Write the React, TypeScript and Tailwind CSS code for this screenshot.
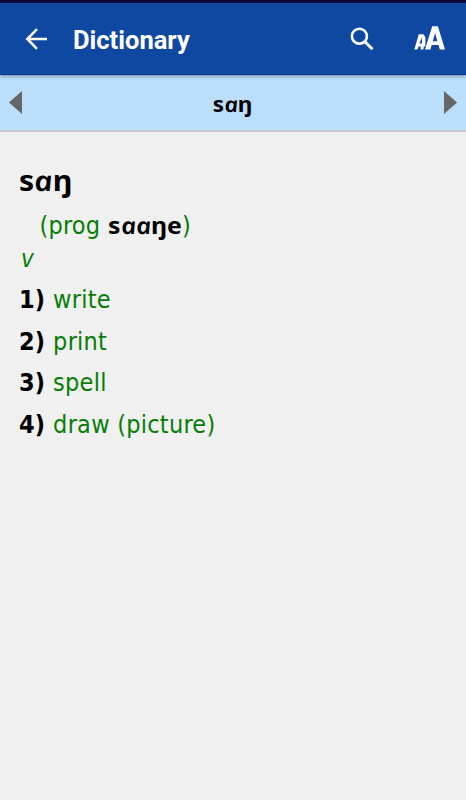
import { Fragment } from "react";

const senses = ["write", "print", "spell", "draw (picture)"];

/** Vernacular text, set with a single-storey "a". */
function Vernacular({ text, className = "" }: { text: string; className?: string }) {
  return (
    <span className={`inline-block font-['Noto_Sans',sans-serif] font-bold text-black ${className}`}>
      {text.split("").map((char, i) =>
        char === "a" ? (
          <span key={i} className="mr-[0.03em] inline-block skew-x-[7deg] scale-x-[1.04] font-semibold italic">
            {char}
          </span>
        ) : (
          <Fragment key={i}>{char}</Fragment>
        ),
      )}
    </span>
  );
}

function AppBar() {
  return (
    <header className="relative z-10 flex h-[75px] items-center border-t-[3px] border-b border-t-[#02063a] border-b-[#0433a0] bg-[#0f48a1] pl-[24px] pr-[20px] text-white shadow-[0_1px_4px_rgba(0,0,0,0.4)]">
      <button aria-label="Back" className="mt-px shrink-0">
        <svg className="size-[24px]" viewBox="0 0 24 24" fill="none" stroke="currentColor" strokeWidth="2.5">
          <path d="M23 12H3.5M13 2.2L3.3 12l9.7 9.8" />
        </svg>
      </button>
      <h1 className="ml-[25px] mt-[4px] font-['Roboto',sans-serif] text-[25.5px] font-bold leading-none">
        Dictionary
      </h1>
      <div className="ml-auto flex items-center">
        <button aria-label="Search">
          <svg className="size-[24px]" viewBox="0 0 24 24" fill="none" stroke="currentColor" strokeWidth="2.6">
            <circle cx="9.4" cy="9.2" r="7.5" />
            <path d="M14.9 14.7l7.6 7.6" strokeWidth="3" />
          </svg>
        </button>
        <button aria-label="Text size" className="mb-px ml-[40px]">
          <svg className="h-[24px] w-[32px]" viewBox="0 0 32 24" fill="currentColor" fillRule="evenodd">
            <path d="M0.3 23.5L4.8 8.3h4.7l1.9 3V20L9.6 21 9.4 23.5H6.6l.2-2.9H4.5L3.5 23.5zM5.4 17.5h2.6V11.5z" />
            <path d="M11 23.5L18.2 0.2h5.7L31 23.5h-5.2l-1.3-4.5h-6.8L16.4 23.5zM18.8 15.2h4.6L21.1 6.9z" />
          </svg>
        </button>
      </div>
    </header>
  );
}

function EntryNav() {
  return (
    <nav className="flex h-[57px] items-center justify-between border-b-2 border-[#cbcbcf] bg-[#bbdefb] px-[9px]">
      <button aria-label="Previous entry">
        <svg className="h-[23px] w-[13px]" viewBox="0 0 13 23" fill="#666666">
          <path d="M13 0v23L0 11.5z" />
        </svg>
      </button>
      <Vernacular text="saŋ" className="mt-[3px] scale-x-[1.07] text-[21px] leading-none" />
      <button aria-label="Next entry">
        <svg className="h-[23px] w-[13px]" viewBox="0 0 13 23" fill="#666666">
          <path d="M0 0v23l13-11.5z" />
        </svg>
      </button>
    </nav>
  );
}

export default function App() {
  return (
    <div className="flex h-[800px] w-[466px] flex-col overflow-hidden bg-[#f0f0f0]">
      <AppBar />
      <EntryNav />
      <main className="flex-1 px-[19px] pt-[28px] font-['DejaVu_Sans_Condensed','DejaVu_Sans',sans-serif] text-[25px] text-[#067d06] [font-stretch:condensed]">
        <h2 className="h-[42px] leading-[42px]">
          <Vernacular text="saŋ" className="-mt-px origin-left scale-x-[1.08] text-[28px]" />
        </h2>
        <p className="h-[46px] pl-[20.5px] leading-[46px] tracking-[0.2px]">
          (prog <Vernacular text="saaŋe" className="mr-[6px] origin-left scale-x-[1.08] text-[23px] tracking-normal" />)
        </p>
        <p className="h-[31px] pl-[2px] text-[24px] italic leading-[23px]">v</p>
        <ol>
          {senses.map((sense, i) => (
            <li key={sense} className="h-[41.5px] leading-[41.5px]">
              <b className="mr-px text-black">{i + 1})</b> <span className="tracking-[0.25px]">{sense}</span>
            </li>
          ))}
        </ol>
      </main>
    </div>
  );
}
